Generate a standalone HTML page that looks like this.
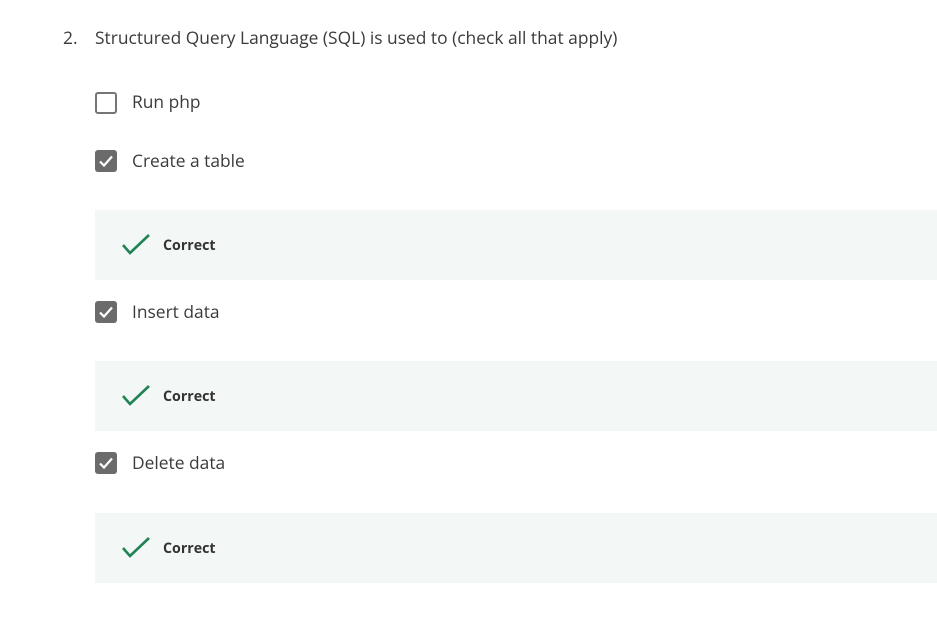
<!DOCTYPE html>
<html><head><style>
body{margin:0;background:#fff;width:937px;height:619px;position:relative;font-family:"Open Sans","Liberation Sans",sans-serif;color:#3a3a3a;overflow:hidden}
.t{position:absolute;font-size:17.4px;white-space:nowrap;line-height:20px}
.box{position:absolute;left:95px;width:22px;height:22px;box-sizing:border-box;border-radius:3px}
.un{border:2px solid #757575;background:#fff}
.ck{background:#6b6b6b}
.panel{position:absolute;left:95px;width:842px;height:70px;background:#f3f8f6}
.panel svg{position:absolute;left:27px;top:24px}
.panel span{position:absolute;left:68px;top:27px;font-size:14.2px;font-weight:bold;color:#333;line-height:18px}
</style></head><body>
<div class="t" style="left:63px;top:28px">2.</div>
<div class="t" style="left:95px;top:28px">Structured Query Language (SQL) is used to (check all that apply)</div>

<div class="box un" style="top:92px"></div>
<div class="t" style="left:132px;top:92px">Run php</div>

<div class="box ck" style="top:150px"><svg width="22" height="22" viewBox="0 0 22 22"><path d="M5 11.5 L9 15.5 L17 6.5" fill="none" stroke="#fff" stroke-width="2.2"/></svg></div>
<div class="t" style="left:132px;top:151px">Create a table</div>

<div class="panel" style="top:210px"><svg width="28" height="22" viewBox="0 0 28 22"><path d="M1 11 L8 19 L27 1" fill="none" stroke="#1f8354" stroke-width="2.6"/></svg><span>Correct</span></div>

<div class="box ck" style="top:301px"><svg width="22" height="22" viewBox="0 0 22 22"><path d="M5 11.5 L9 15.5 L17 6.5" fill="none" stroke="#fff" stroke-width="2.2"/></svg></div>
<div class="t" style="left:132px;top:302px">Insert data</div>

<div class="panel" style="top:361px"><svg width="28" height="22" viewBox="0 0 28 22"><path d="M1 11 L8 19 L27 1" fill="none" stroke="#1f8354" stroke-width="2.6"/></svg><span>Correct</span></div>

<div class="box ck" style="top:452px"><svg width="22" height="22" viewBox="0 0 22 22"><path d="M5 11.5 L9 15.5 L17 6.5" fill="none" stroke="#fff" stroke-width="2.2"/></svg></div>
<div class="t" style="left:132px;top:453px">Delete data</div>

<div class="panel" style="top:513px"><svg width="28" height="22" viewBox="0 0 28 22"><path d="M1 11 L8 19 L27 1" fill="none" stroke="#1f8354" stroke-width="2.6"/></svg><span>Correct</span></div>
</body></html>
